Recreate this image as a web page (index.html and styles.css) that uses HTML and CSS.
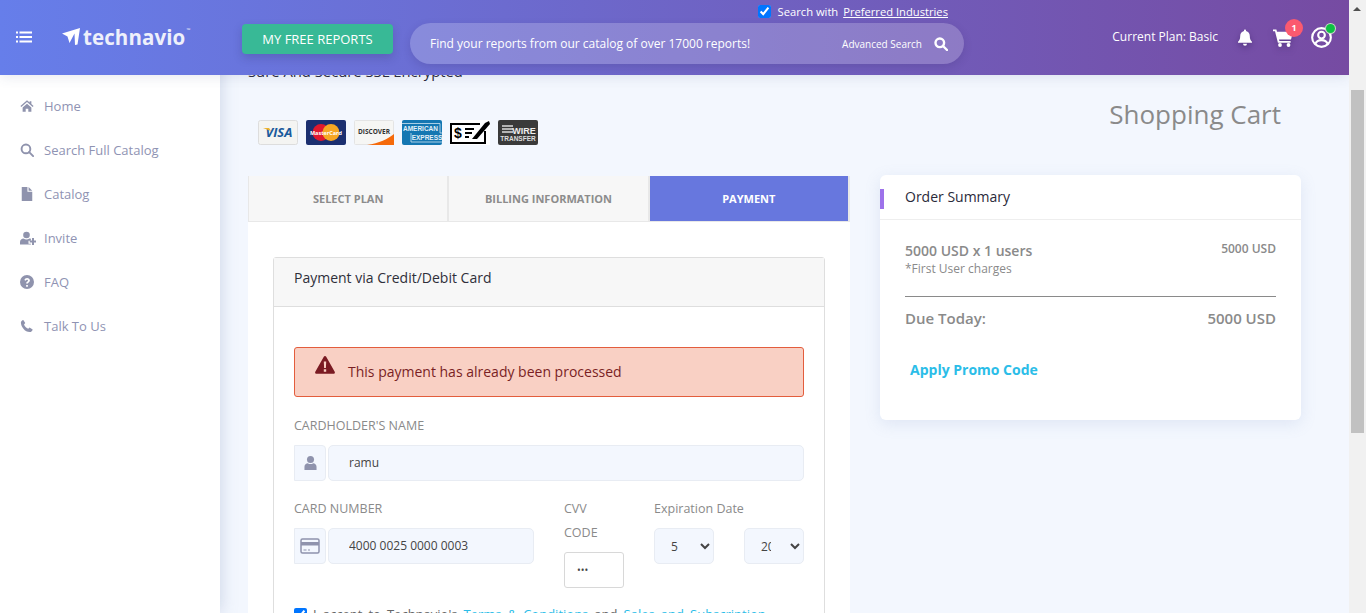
FILE: index.html
```html
<!DOCTYPE html>
<html lang="en">
<head>
	<meta charset="UTF-8">
	<meta name="viewport" content="width=device-width, initial-scale=1.0">
	<title>Technavio - Shopping Cart</title>
	<link rel="stylesheet" href="styles.css">
</head>
<body>
	<div class="app">
		<header class="topbar">
			<svg class="menu-icon" viewBox="0 0 16 12" width="16" height="12" fill="#fff"><rect x="0" y="0.5" width="2" height="2"/><rect x="0" y="5" width="2" height="2"/><rect x="0" y="9.5" width="2" height="2"/><rect x="3.5" y="0.5" width="12.5" height="2"/><rect x="3.5" y="5" width="12.5" height="2"/><rect x="3.5" y="9.5" width="12.5" height="2"/></svg>
			<a class="logo">
				<svg viewBox="0 0 18 17" width="18" height="17" fill="#fff"><path d="M0 5.5 18 0 15.5 16.5 13 17 12.5 5.5 7.5 15 5.5 8.5z"/></svg>
				<span>technavio</span><sup>™</sup>
			</a>
			<a class="free-btn">MY FREE REPORTS</a>
			<div class="search-col">
				<label class="pref"><input type="checkbox" checked> Search with <u>Preferred Industries</u></label>
				<div class="search-pill">
					<span class="search-hint">Find your reports from our catalog of over 17000 reports!</span>
					<span class="adv">Advanced Search</span>
					<svg viewBox="0 0 14 14" width="14" height="14" fill="none" stroke="#fff" stroke-width="2.4"><circle cx="5.8" cy="5.8" r="4.3"/><path d="M9 9l4 4" stroke-linecap="round"/></svg>
				</div>
			</div>
			<span class="plan">Current Plan: Basic</span>
			<svg class="bell" viewBox="0 0 16 17" width="16" height="17" fill="#fff"><path d="M8 0.5c.6 0 1 .4 1 1v.6c2.4.5 3.8 2.4 3.8 4.9 0 3 .8 4.3 2.2 5.7v1H1v-1c1.4-1.4 2.2-2.7 2.2-5.7 0-2.5 1.4-4.4 3.8-4.9v-.6c0-.6.4-1 1-1z"/><path d="M6 14.8h4a2 2 0 0 1-4 0z"/></svg>
			<div class="cart">
				<svg viewBox="0 0 20 18" width="20" height="18" fill="#fff"><path d="M0 0.5h3.4l.6 2.2H20l-2 7.8H6l.4 1.5h11.2v1.8H4.9L2 2.3H0z"/><circle cx="7" cy="16" r="1.9"/><circle cx="15.5" cy="16" r="1.9"/></svg>
				<span class="badge">1</span>
			</div>
			<div class="avatar">
				<svg viewBox="0 0 22 22" width="22" height="22" fill="none" stroke="#fff" stroke-width="2.2"><circle cx="11" cy="11" r="9.8"/><circle cx="11" cy="8.5" r="3.5"/><path d="M4.5 18c1-3 3.5-4.2 6.5-4.2s5.5 1.2 6.5 4.2"/></svg>
				<span class="online"></span>
			</div>
		</header>

		<nav class="sidebar">
			<a class="nav-item"><svg viewBox="0 0 16 16" width="14" height="14"><path d="M8 1.5 0.5 8l1 1L8 3.5 14.5 9l1-1L13 5.8V2.5h-2v1.6z"/><path d="M3 9.8 8 5.5l5 4.3v4.7H9.5V11h-3v3.5H3z"/></svg>Home</a>
			<a class="nav-item"><svg class="icon-line" viewBox="0 0 16 16" width="14" height="14"><circle cx="6.8" cy="6.8" r="5"/><path d="M10.5 10.5l4.5 4.5"/></svg>Search Full Catalog</a>
			<a class="nav-item"><svg viewBox="0 0 16 16" width="14" height="14"><path d="M2 0h6.5v5.5H14V16H2z"/><path d="M9.8 0 14 4.2H9.8z"/></svg>Catalog</a>
			<a class="nav-item"><svg class="icon-wide" viewBox="0 0 16 14" width="16" height="14"><circle cx="6.5" cy="4" r="3.3"/><path d="M0 13.5v-2.5c0-2.3 1.8-3.500 3.500-3.500 1 .7 2 1 3 1s2-.3 3-1c.5 0 1 .1 1.400.3v2H8.500v3h2.400v.7z"/><path d="M12 7h2v2.500h2.200v2H14V14h-2v-2.500H9.700v-2H12z"/></svg>Invite</a>
			<a class="nav-item"><svg viewBox="0 0 16 16" width="14" height="14"><path fill-rule="evenodd" d="M8 0a8 8 0 1 1 0 16A8 8 0 0 1 8 0zM7 11.300v2h2v-2zM5 5.800l1.600.7c.2-.7.7-1.100 1.400-1.100.7 0 1.200.4 1.200 1 0 .5-.4.800-1 1.200-.8.500-1.200 1-1.200 2.200h2c0-.6.300-.9.900-1.300.9-.6 1.400-1.200 1.400-2.200 0-1.700-1.300-2.800-3.200-2.800-1.500 0-2.700.8-3.100 2.300z"/></svg>FAQ</a>
			<a class="nav-item"><svg viewBox="0 0 16 16" width="14" height="14"><path d="M3.800 1 6 4.700 4.600 6.300c.6 1.900 2.600 3.900 4.800 4.800l1.500-1.400 3.600 2.200c-.3 1.600-1.600 3-3.300 3C5.500 14.900 1 8.800 1 4 1 2.600 2.300 1.300 3.800 1z"/></svg>Talk To Us</a>
		</nav>

		<main class="content">
			<div class="page-head">
				<div>
					<p class="secure">Sure And Secure SSL Encrypted</p>
					<div class="pay-logos">
						<svg viewBox="0 0 40 25" width="40" height="25"><rect x=".5" y=".5" width="39" height="24" rx="2" fill="#f4f4f2" stroke="#ddd"/><text x="21" y="17" text-anchor="middle" class="t-visa">VISA</text><path d="M5 8h6l2 3z" fill="#eeb32b"/></svg>
						<svg viewBox="0 0 40 25" width="40" height="25"><rect width="40" height="25" rx="2" fill="#1b2f70"/><circle cx="15" cy="12.500" r="8.500" fill="#e0182d"/><circle cx="25" cy="12.500" r="8.500" fill="#f6a623"/><text x="20" y="14.500" text-anchor="middle" class="t-mc">MasterCard</text></svg>
						<svg viewBox="0 0 40 25" width="40" height="25"><rect x=".5" y=".5" width="39" height="24" rx="1" fill="#f6f6f4" stroke="#e4e4e4"/><path d="M13 25C25 23 34 19 40 14V25z" fill="#f56a0b"/><text x="20" y="13.500" text-anchor="middle" class="t-disc">DISCOVER</text></svg>
						<svg viewBox="0 0 40 25" width="40" height="25"><rect width="40" height="25" rx="2" fill="#1477b2"/><path d="M0 3.500H38V13H40M9 13V22H40" fill="none" stroke="#cfe4f2" stroke-width=".8"/><text x="18.500" y="11" text-anchor="middle" class="t-amex">AMERICAN</text><text x="25" y="20" text-anchor="middle" class="t-amex">EXPRESS</text></svg>
						<svg viewBox="0 0 40 25" width="40" height="25"><rect width="40" height="25" fill="#fff"/><path d="M30 4H1V23H35V11" fill="none" stroke="#000" stroke-width="2"/><text x="8" y="18" text-anchor="middle" class="t-check">$</text><path d="M15 9h9M15 13h7M15 17h4" stroke="#000" stroke-width="1.800"/><path d="M22 19 35 3l4-2 1 3-13 15z" fill="#000"/></svg>
						<svg viewBox="0 0 40 25" width="40" height="25"><rect width="40" height="25" rx="2" fill="#3a3a3a"/><path d="M4 6h11M4 9h11M4 12h11" stroke="#ddd" stroke-width="1.600"/><text x="26" y="13.500" text-anchor="middle" class="t-wire">WIRE</text><text x="20" y="21" text-anchor="middle" class="t-transfer">TRANSFER</text></svg>
					</div>
				</div>
				<h1>Shopping Cart</h1>
			</div>

			<div class="columns">
				<section class="checkout">
					<div class="steps">
						<div class="step">SELECT PLAN</div>
						<div class="step">BILLING INFORMATION</div>
						<div class="step active">PAYMENT</div>
					</div>
					<div class="pay-wrap">
						<div class="pay-card">
							<div class="pay-card-head">Payment via Credit/Debit Card</div>
							<div class="pay-card-body">
								<div class="alert">
									<svg viewBox="0 0 20 18" width="20" height="18"><path fill="#7a1a22" fill-rule="evenodd" d="M10 0c.5 0 .9.300 1.200.8l8.500 15c.5.900-.1 2-1.200 2H1.500c-1.100 0-1.700-1.100-1.200-2l8.500-15C9.100.300 9.500 0 10 0zM8.800 5.500l.3 6.500h1.800l.3-6.500zM8.800 13.300v2.400h2.400v-2.400z"/></svg>
									<span>This payment has already been processed</span>
								</div>

								<label class="field-label">CARDHOLDER'S NAME</label>
								<div class="input-group">
									<span class="addon"><svg viewBox="0 0 14 16" width="13" height="16" fill="#8f93ad"><circle cx="7" cy="4.200" r="3.800"/><path d="M0.500 15.500v-3.500c0-2.500 2-3.800 3.500-3.800 1 .6 2 .9 3 .9s2-.3 3-.9c1.500 0 3.500 1.300 3.500 3.800v3.500z"/></svg></span>
									<input class="text-input" type="text" value="ramu">
								</div>

								<div class="card-row">
									<div class="col-number">
										<label class="field-label">CARD NUMBER</label>
										<div class="input-group">
											<span class="addon"><svg viewBox="0 0 20 16" width="20" height="16"><rect x="1" y="1" width="18" height="14" rx="1.500" fill="none" stroke="#8f93ad" stroke-width="1.500"/><rect x="1" y="4" width="18" height="3.500" fill="#8f93ad"/><path d="M3.500 12h3M8 12h2" stroke="#8f93ad" stroke-width="1.200"/></svg></span>
											<input class="text-input" type="text" value="4000 0025 0000 0003">
										</div>
									</div>
									<div class="col-cvv">
										<label class="field-label">CVV CODE</label>
										<input class="cvv-input" type="password" value="123">
									</div>
									<div class="col-exp">
										<label class="field-label">Expiration Date</label>
										<div class="exp-selects">
											<select class="exp-select"><option>5</option></select>
											<select class="exp-select"><option>2024</option></select>
										</div>
									</div>
								</div>

								<label class="terms"><input type="checkbox" checked> I accept to Technavio's <a>Terms &amp; Conditions</a> and <a>Sales and Subscription</a></label>
							</div>
						</div>
					</div>
				</section>

				<aside class="summary">
					<div class="summary-head">Order Summary</div>
					<div class="summary-body">
						<div class="line-item">
							<div>
								<div class="line-title">5000 USD x 1 users</div>
								<div class="line-note">*First User charges</div>
							</div>
							<span class="line-price">5000 USD</span>
						</div>
						<div class="due">
							<span>Due Today:</span>
							<span>5000 USD</span>
						</div>
						<a class="promo">Apply Promo Code</a>
					</div>
				</aside>
			</div>
		</main>
	</div>
	<div class="scrollbar">
		<span class="scroll-arrow"></span>
		<span class="scroll-thumb"></span>
	</div>
</body>
</html>
```

FILE: styles.css
```css
* {
	box-sizing: border-box;
}

html, body {
	height: 613px;
	margin: 0;
	overflow: hidden;
}

body {
	display: flex;
	font-family: "Open Sans", "Liberation Sans", sans-serif;
	color: #222;
	background: #f3f7fe;
}

.app {
	position: relative;
	display: flex;
	flex: 1;
	height: 613px;
	overflow: hidden;
}

/* top bar */
.topbar {
	position: absolute;
	top: 0;
	left: 0;
	right: 0;
	z-index: 5;
	display: flex;
	align-items: center;
	height: 75px;
	padding-left: 16px;
	color: #fff;
	background: linear-gradient(90deg, #667eea, #764ba2);
	box-shadow: 0 2px 12px rgba(60,70,120,.12);
}

.menu-icon {
	flex: none;
	margin-top: -1px;
}

.logo {
	display: flex;
	align-items: center;
	width: 180px;
	margin-left: 30px;
	margin-top: -2px;
	font-size: 20.5px;
	font-weight: 700;
	letter-spacing: .1px;
	color: #eef0fb;
}

.logo span {
	margin-left: 3px;
}

.logo sup {
	font-size: 5px;
	font-weight: 400;
	margin-top: -14px;
	margin-left: 1px;
}

.free-btn {
	flex: none;
	width: 151px;
	height: 30px;
	margin-top: 3px;
	border-radius: 4px;
	font-size: 13px;
	line-height: 30px;
	text-align: center;
	color: #fff;
	background: #38b996;
	box-shadow: 0 4px 10px rgba(40,40,90,.22);
}

.search-col {
	position: relative;
	flex: none;
	width: 554px;
	height: 41px;
	margin: 12px 0 0 17px;
}

.pref {
	position: absolute;
	top: -19px;
	right: 16px;
	display: flex;
	align-items: center;
	gap: 2px;
	font-size: 11.2px;
	font-weight: 500;
	white-space: pre;
}

.pref input {
	width: 13px;
	height: 13px;
	margin: 0 2px 0 0;
}

.search-pill {
	display: flex;
	align-items: center;
	height: 41px;
	padding: 0 16px 0 20px;
	border-radius: 21px;
	background: rgba(255,255,255,.2);
	box-shadow: 0 3px 8px rgba(50,40,100,.18);
}

.search-hint {
	flex: 1;
	font-size: 12px;
	font-weight: 500;
}

.adv {
	margin-right: 12px;
	font-size: 10px;
	font-weight: 500;
}

.plan {
	margin-left: auto;
	margin-top: -3px;
	font-size: 12px;
	font-weight: 500;
	white-space: nowrap;
}

.bell {
	flex: none;
	margin: 0 0 0 19px;
	filter: drop-shadow(0 3px 3px rgba(40,20,80,.4));
}

.cart {
	position: relative;
	flex: none;
	margin: 1px 0 0 20px;
	height: 18px;
}

.cart svg {
	display: block;
	filter: drop-shadow(0 3px 3px rgba(40,20,80,.3));
}

.badge {
	position: absolute;
	top: -10px;
	left: 12px;
	width: 18px;
	height: 18px;
	border-radius: 50%;
	font-size: 9px;
	font-weight: 700;
	line-height: 18px;
	text-align: center;
	color: #fff;
	background: #fb5a6f;
}

.avatar {
	position: relative;
	flex: none;
	width: 21px;
	height: 21px;
	margin: 0 17px 0 18px;
}

.avatar svg {
	display: block;
	width: 21px;
	height: 21px;
}

.online {
	position: absolute;
	top: -3px;
	right: -3px;
	width: 9px;
	height: 9px;
	border-radius: 50%;
	background: #0dc143;
	box-shadow: 0 0 0 1px #c8d8c8;
}

/* sidebar */
.sidebar {
	position: relative;
	z-index: 2;
	flex: none;
	width: 220px;
	padding-top: 84px;
	background: #fff;
	box-shadow: 0 0 16px rgba(120,140,180,.35);
}

.nav-item {
	display: flex;
	align-items: center;
	height: 44px;
	padding-left: 20px;
	font-size: 13px;
	color: #8f93b3;
}

.nav-item svg {
	flex: none;
	margin-right: 10px;
	fill: #8f93ad;
}

.nav-item .icon-wide {
	margin-right: 8px;
}

.nav-item .icon-line {
	fill: none;
	stroke: #8f93ad;
	stroke-width: 2.2;
	stroke-linecap: round;
}

/* main */
.content {
	flex: 1;
	min-width: 0;
	padding: 61px 48px 0 28px;
}

.page-head {
	display: flex;
	justify-content: space-between;
	height: 115px;
}

.secure {
	margin: 0;
	font-size: 14.8px;
	line-height: 20px;
	color: #2b2b3a;
}

.pay-logos {
	display: flex;
	gap: 8px;
	margin: 39px 0 0 10px;
}

.pay-logos svg {
	display: block;
}

.t-visa {
	font: italic 700 13px "Open Sans", sans-serif;
	fill: #1a5a9c;
}

.t-mc {
	font: 700 5.5px "Open Sans", sans-serif;
	fill: #fff;
}

.t-disc {
	font: 700 6.5px "Open Sans", sans-serif;
	fill: #333;
}

.t-amex {
	font: 600 6.5px "Liberation Sans", sans-serif;
	fill: #e3f0f8;
}

.t-check {
	font: 700 14px "Liberation Sans", sans-serif;
	fill: #000;
}

.t-wire {
	font: 700 9px "Liberation Sans", sans-serif;
	fill: #eee;
}

.t-transfer {
	font: 700 6.5px "Liberation Sans", sans-serif;
	fill: #ddd;
}

h1 {
	margin: 35px 20px 0 0;
	font-size: 26px;
	font-weight: 400;
	line-height: 36px;
	color: #8a8a8a;
}

.columns {
	display: flex;
	align-items: flex-start;
	gap: 30px;
}

.checkout {
	flex: none;
	width: 602px;
	background: #fff;
}

.steps {
	display: flex;
	gap: 2px;
	height: 46px;
	padding: 0 2px 1px 1px;
	background: #e8e8e8;
}

.step {
	flex: 1;
	font-size: 11px;
	font-weight: 700;
	line-height: 45px;
	text-align: center;
	color: #8c8c8c;
	background: #f7f7f7;
}

.step.active {
	color: #fff;
	background: #6777de;
}

.pay-wrap {
	padding: 35px 25px 40px;
}

.pay-card {
	border: 1px solid #dedede;
	border-radius: 3px;
}

.pay-card-head {
	height: 49px;
	padding-left: 20px;
	font-size: 14px;
	line-height: 40px;
	color: #2f2f3a;
	background: #f7f7f7;
	border-bottom: 1px solid #dedede;
}

.pay-card-body {
	padding: 40px 20px 30px;
}

.alert {
	display: flex;
	gap: 13px;
	height: 50px;
	padding: 8px 20px;
	border: 1px solid #e35d3d;
	border-radius: 3px;
	font-size: 14px;
	color: #7a1f24;
	background: #f9d0c4;
}

.alert span {
	margin-top: 6px;
}

.field-label {
	display: block;
	font-size: 12.5px;
	line-height: 24px;
	color: #8a8a8a;
}

.pay-card-body > .field-label {
	margin-top: 17px;
	margin-bottom: 7px;
}

.input-group {
	display: flex;
	gap: 2px;
	height: 36px;
}

.addon {
	display: flex;
	flex: none;
	align-items: center;
	justify-content: center;
	width: 32px;
	border: 1px solid #e8ecf3;
	border-radius: 0 4px 4px 0;
	background: #f3f7fe;
}

.text-input {
	flex: 1;
	min-width: 0;
	padding: 0 20px 2px;
	border: 1px solid #e8ecf3;
	border-radius: 5px;
	outline: 0;
	font: 12px "Open Sans", sans-serif;
	color: #444;
	background: #f3f7fe;
}

.card-row {
	display: flex;
	margin-top: 16px;
}

.card-row .field-label {
	margin-bottom: 7px;
}

.col-number {
	flex: none;
	width: 240px;
}

.col-cvv {
	flex: none;
	width: 60px;
	margin-left: 30px;
}

.col-cvv .field-label {
	width: 45px;
}

.cvv-input {
	display: block;
	width: 60px;
	height: 36px;
	padding: 0 12px;
	border: 1px solid #d8d8d8;
	border-radius: 3px;
	outline: 0;
	font: 10px "Open Sans", sans-serif;
	color: #444;
	background: #fff;
}

.col-exp {
	flex: none;
	width: 150px;
	margin-left: 30px;
}

.exp-selects {
	display: flex;
	justify-content: space-between;
}

.exp-select {
	width: 60px;
	height: 36px;
	padding: 0 16px 0 12px;
	border: 1px solid #e8ecf3;
	border-radius: 5px;
	outline: 0;
	font: 12px "Open Sans", sans-serif;
	color: #444;
	background-color: #f3f7fe;
}

.terms {
	display: block;
	margin-top: 17px;
	font-size: 13px;
	line-height: 18px;
	word-spacing: 2.7px;
	color: #666;
	white-space: nowrap;
}

.terms input {
	margin: 0;
	vertical-align: -2px;
}

.terms a {
	color: #2bbde8;
}

/* order summary */
.summary {
	flex: none;
	width: 421px;
	height: 245px;
	margin-top: -1px;
	border-radius: 6px;
	background: #fff;
	box-shadow: 0 4px 16px rgba(120,140,190,.16);
}

.summary-head {
	position: relative;
	height: 45px;
	padding-left: 25px;
	border-bottom: 1px solid #eee;
	font-size: 14px;
	line-height: 44px;
	color: #2a2a3a;
}

.summary-head::before {
	content: "";
	position: absolute;
	left: 0;
	top: 14px;
	width: 4px;
	height: 20px;
	background: #9d72ea;
}

.summary-body {
	padding: 0 25px;
}

.line-item {
	display: flex;
	justify-content: space-between;
	height: 77px;
	padding-top: 20px;
	border-bottom: 1px solid #8a8a8a;
}

.line-title {
	font-size: 14px;
	font-weight: 600;
	line-height: 22px;
	color: #8a8a8a;
}

.line-note {
	font-size: 12px;
	line-height: 14px;
	color: #8a8a8a;
}

.line-price {
	font-size: 12px;
	font-weight: 600;
	line-height: 18px;
	color: #8a8a8a;
}

.due {
	display: flex;
	justify-content: space-between;
	margin-top: 9px;
	font-size: 15px;
	font-weight: 600;
	line-height: 24px;
	color: #8a8a8a;
}

.promo {
	display: block;
	margin: 29px 0 0 5px;
	font-size: 14px;
	font-weight: 700;
	line-height: 22px;
	color: #2bbde8;
}

/* page scrollbar */
.scrollbar {
	position: relative;
	flex: none;
	width: 17px;
	height: 613px;
	background: #f1f1f1;
}

.scroll-arrow {
	position: absolute;
	top: 7px;
	left: 4px;
	border: 4px solid transparent;
	border-top: 0;
	border-bottom: 4px solid #505050;
}

.scroll-thumb {
	position: absolute;
	top: 90px;
	left: 2px;
	width: 13px;
	height: 343px;
	background: #c1c1c1;
}
```
